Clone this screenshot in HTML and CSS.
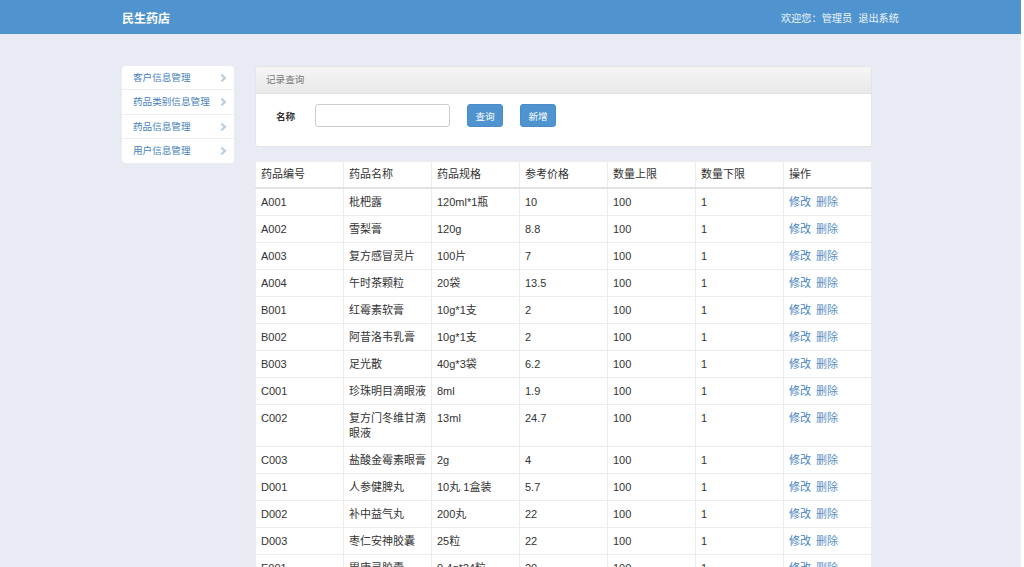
FILE: index.html
```html
<!DOCTYPE html>
<html lang="zh-CN">

<head>
    <meta charset="UTF-8">
    <meta name="viewport" content="width=device-width, initial-scale=1.0">
    <title>民生药店 - 药品信息管理</title>
    <link rel="stylesheet" href="styles.css">
</head>

<body>
    <div class="topbar">
        <div class="wrap topbar-inner">
            <span class="brand">民生药店</span>
            <span class="user">欢迎您：管理员<a href="#" class="logout">退出系统</a></span>
        </div>
    </div>

    <div class="wrap main">
        <ul class="side-menu">
            <li><a href="#">客户信息管理<span class="arrow"></span></a></li>
            <li><a href="#">药品类别信息管理<span class="arrow"></span></a></li>
            <li><a href="#">药品信息管理<span class="arrow"></span></a></li>
            <li><a href="#">用户信息管理<span class="arrow"></span></a></li>
        </ul>

        <div class="content">
            <div class="panel">
                <div class="panel-heading">记录查询</div>
                <div class="panel-body">
                    <label for="name">名称</label>
                    <input type="text" id="name">
                    <button type="button" class="btn">查询</button>
                    <button type="button" class="btn">新增</button>
                </div>
            </div>

            <table class="data-table">
                <thead>
                    <tr>
                        <th>药品编号</th>
                        <th>药品名称</th>
                        <th>药品规格</th>
                        <th>参考价格</th>
                        <th>数量上限</th>
                        <th>数量下限</th>
                        <th>操作</th>
                    </tr>
                </thead>
                <tbody id="rows"></tbody>
            </table>
        </div>
    </div>

    <script>
        const drugs = [
            ['A001', '枇杷露', '120ml*1瓶', '10'],
            ['A002', '雪梨膏', '120g', '8.8'],
            ['A003', '复方感冒灵片', '100片', '7'],
            ['A004', '午时茶颗粒', '20袋', '13.5'],
            ['B001', '红霉素软膏', '10g*1支', '2'],
            ['B002', '阿昔洛韦乳膏', '10g*1支', '2'],
            ['B003', '足光散', '40g*3袋', '6.2'],
            ['C001', '珍珠明目滴眼液', '8ml', '1.9'],
            ['C002', '复方门冬维甘滴眼液', '13ml', '24.7'],
            ['C003', '盐酸金霉素眼膏', '2g', '4'],
            ['D001', '人参健脾丸', '10丸 1盒装', '5.7'],
            ['D002', '补中益气丸', '200丸', '22'],
            ['D003', '枣仁安神胶囊', '25粒', '22'],
            ['E001', '胃康灵胶囊', '0.4g*24粒', '20'],
            ['E002', '健胃消食片', '32片', '12']
        ];

        const tbody = document.getElementById('rows');
        drugs.forEach(d => {
            const tr = document.createElement('tr');
            tr.innerHTML = `
                <td>${d[0]}</td>
                <td>${d[1]}</td>
                <td>${d[2]}</td>
                <td>${d[3]}</td>
                <td>100</td>
                <td>1</td>
                <td><a href="#">修改</a> <a href="#" class="del">删除</a></td>`;
            tbody.appendChild(tr);
        });
    </script>
</body>

</html>
```

FILE: styles.css
```css
html {
    background-color: #fff;
}

body {
    margin: 0 3px 0 0;
    min-height: 567px;
    background-color: #e8ebf3;
    font-family: 'Liberation Sans', 'Noto Sans CJK SC', sans-serif;
    color: #333;
}

a {
    text-decoration: none;
}

.wrap {
    width: 777px;
    margin: 0 auto;
}

.topbar {
    background-color: #4f94cf;
    height: 34px;
}

.topbar-inner {
    display: flex;
    justify-content: space-between;
    align-items: center;
    height: 34px;
}

.brand {
    color: #fff;
    font-size: 12px;
    font-weight: bold;
}

.user {
    color: #eef4fa;
    font-size: 10.2px;
}

.logout {
    color: #eef4fa;
    margin-left: 6px;
}

.main {
    display: flex;
    align-items: flex-start;
    gap: 21px;
    padding-top: 32px;
}

.side-menu {
    list-style: none;
    margin: 0;
    padding: 0;
    width: 112px;
    flex-shrink: 0;
    background-color: #fff;
    border-radius: 4px;
    font-size: 9.6px;
}

.side-menu li {
    border-bottom: 1px solid #eceef2;
}

.side-menu li:last-child {
    border-bottom: none;
}

.side-menu a {
    display: flex;
    justify-content: space-between;
    align-items: center;
    padding: 5px 9px 5px 11px;
    line-height: 13.4px;
    color: #4580bc;
}

.arrow {
    width: 4px;
    height: 4px;
    border-top: 2px solid #b9cde2;
    border-right: 2px solid #b9cde2;
    transform: rotate(45deg);
}

.content {
    width: 617px;
}

.panel {
    background-color: #fff;
    border: 1px solid #e2e4e8;
    border-radius: 3px;
    margin-bottom: 14px;
}

.panel-heading {
    height: 26px;
    line-height: 26px;
    padding-left: 10px;
    font-size: 9.6px;
    color: #777;
    background: linear-gradient(#f5f5f5, #e9e9e9);
    border-bottom: 1px solid #e2e2e2;
}

.panel-body {
    display: flex;
    align-items: center;
    padding: 10px 20px 19px;
}

.panel-body label {
    width: 39px;
    font-size: 9.6px;
    font-weight: bold;
    color: #333;
}

.panel-body input {
    width: 135px;
    height: 23px;
    box-sizing: border-box;
    border: 1px solid #ccc;
    border-radius: 3px;
    margin-right: 17px;
}

.btn {
    width: 36px;
    height: 23px;
    padding: 0;
    margin-right: 17px;
    border: 1px solid #4a8ccb;
    border-radius: 3px;
    background-color: #4f94cf;
    color: #fff;
    font-family: 'Liberation Sans', 'Noto Sans CJK SC', sans-serif;
    font-size: 9.6px;
}

.data-table {
    width: 100%;
    table-layout: fixed;
    border-collapse: collapse;
    background-color: #fff;
    font-size: 11px;
    line-height: 15px;
}

.data-table th,
.data-table td {
    border: 1px solid #ececec;
    text-align: left;
    vertical-align: top;
    padding: 6px 3px 5px 5px;
}

.data-table th {
    font-weight: normal;
    padding: 5px 3px 5px 5px;
    border-bottom: 2px solid #e2e2e2;
}

.data-table a {
    color: #3f82c2;
}

.data-table a.del {
    color: #5a8fc6;
    margin-left: 2px;
}
```
